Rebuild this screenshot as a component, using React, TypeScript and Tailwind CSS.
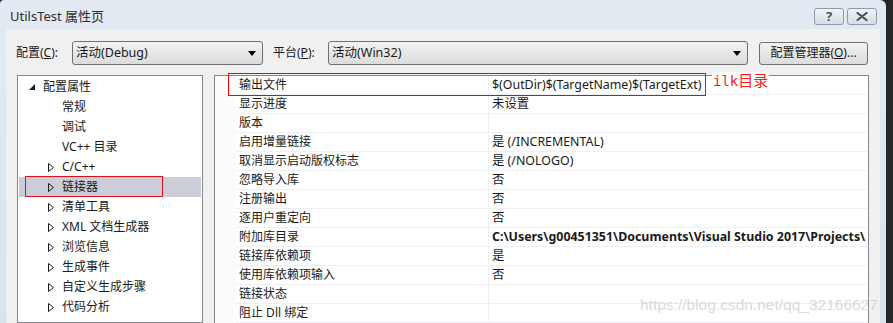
import React from "react";

const FONT = '"Noto Sans", "Noto Sans CJK SC", sans-serif';

type TreeItem = { t: string; lvl: 0 | 1; exp?: "open" | "closed"; sel?: boolean };

const tree: TreeItem[] = [
  { t: "配置属性", lvl: 0, exp: "open" },
  { t: "常规", lvl: 1 },
  { t: "调试", lvl: 1 },
  { t: "VC++ 目录", lvl: 1 },
  { t: "C/C++", lvl: 1, exp: "closed" },
  { t: "链接器", lvl: 1, exp: "closed", sel: true },
  { t: "清单工具", lvl: 1, exp: "closed" },
  { t: "XML 文档生成器", lvl: 1, exp: "closed" },
  { t: "浏览信息", lvl: 1, exp: "closed" },
  { t: "生成事件", lvl: 1, exp: "closed" },
  { t: "自定义生成步骤", lvl: 1, exp: "closed" },
  { t: "代码分析", lvl: 1, exp: "closed" },
];

const props: { l: string; v: string; b?: boolean }[] = [
  { l: "输出文件", v: "$(OutDir)$(TargetName)$(TargetExt)" },
  { l: "显示进度", v: "未设置" },
  { l: "版本", v: "" },
  { l: "启用增量链接", v: "是 (/INCREMENTAL)" },
  { l: "取消显示启动版权标志", v: "是 (/NOLOGO)" },
  { l: "忽略导入库", v: "否" },
  { l: "注册输出", v: "否" },
  { l: "逐用户重定向", v: "否" },
  { l: "附加库目录", v: "C:\\Users\\g00451351\\Documents\\Visual Studio 2017\\Projects\\", b: true },
  { l: "链接库依赖项", v: "是" },
  { l: "使用库依赖项输入", v: "否" },
  { l: "链接状态", v: "" },
  { l: "阻止 Dll 绑定", v: "" },
];

function OpenTri() {
  return (
    <svg width="6" height="6" viewBox="0 0 6 6" className="block">
      <polygon points="6,0 6,6 0,6" fill="#1a1a1a" />
    </svg>
  );
}

function ClosedTri() {
  return (
    <svg width="6" height="9" viewBox="0 0 6 9" className="block">
      <polygon points="0.5,0.5 5.5,4.5 0.5,8.5" fill="none" stroke="#1a1a1a" strokeWidth="1" />
    </svg>
  );
}

function Arrow() {
  return (
    <svg width="8" height="5" viewBox="0 0 8 5" className="block">
      <polygon points="0,0 8,0 4,5" fill="#000" />
    </svg>
  );
}

export default function App() {
  return (
    <div
      className="relative w-[893px] h-[323px] overflow-hidden bg-[#262626] text-[12px] text-[#1a1a1a]"
      style={{ fontFamily: FONT }}
    >
      <div className="w-[886px] h-full flex flex-col rounded-tr-[6px] rounded-tl-[4px] bg-gradient-to-b from-[#e3eaf2] to-[#d8e3ef]">
        {/* Title bar */}
        <div className="h-[29px] flex items-start shrink-0">
          <div className="pl-[10px] pt-[6px] text-[13px] text-[#2e2e2e] leading-[20px]">UtilsTest 属性页</div>
          <div className="ml-auto flex gap-[3px] pt-[8px] pr-[9px]">
            <div className="w-[30px] h-[17px] rounded-[3px] border border-[#8d9bad] bg-gradient-to-b from-[#f1f4f8] to-[#d6dde6] flex items-center justify-center text-[13px] font-bold leading-none text-[#46525f]">
              ?
            </div>
            <div className="w-[30px] h-[17px] rounded-[3px] border border-[#8d9bad] bg-gradient-to-b from-[#f1f4f8] to-[#d6dde6] flex items-center justify-center">
              <svg width="12" height="9" viewBox="0 0 12 9">
                <path d="M1.5 1 L10.5 8 M10.5 1 L1.5 8" stroke="#46525f" strokeWidth="2.2" strokeLinecap="round" />
              </svg>
            </div>
          </div>
        </div>

        {/* Client */}
        <div className="flex-1 mx-[6px] bg-[#f0f0f0] flex flex-col min-h-0">
          {/* Top row */}
          <div className="flex items-center pt-[12px] pl-[10px] pr-[12px] h-[36px] shrink-0">
            <span className="w-[56px]">
              配置(<span className="underline">C</span>):
            </span>
            <div className="w-[191px] h-[24px] rounded-[3px] border border-[#707070] bg-gradient-to-b from-[#f2f2f2] to-[#dcdcdc] flex items-center pl-[3px] pr-[6px]">
              <span className="text-[12.5px]">活动(Debug)</span>
              <span className="ml-auto">
                <Arrow />
              </span>
            </div>
            <span className="ml-[10px] w-[55px]">
              平台(<span className="underline">P</span>):
            </span>
            <div className="w-[420px] h-[24px] rounded-[3px] border border-[#707070] bg-gradient-to-b from-[#f2f2f2] to-[#dcdcdc] flex items-center pl-[3px] pr-[6px]">
              <span className="text-[12.5px]">活动(Win32)</span>
              <span className="ml-auto">
                <Arrow />
              </span>
            </div>
            <div className="ml-auto w-[109px] h-[23px] rounded-[3px] border border-[#707070] bg-gradient-to-b from-[#f2f2f2] to-[#dcdcdc] flex items-center justify-center">
              配置管理器(<span className="underline">O</span>)...
            </div>
          </div>

          {/* Panels */}
          <div className="flex gap-[11px] pt-[10px] px-[11px] flex-1 min-h-0">
            {/* Tree */}
            <div className="w-[186px] shrink-0 border border-[#828790] bg-white pt-[1px]">
              {tree.map((it, i) => (
                <div
                  key={i}
                  className={
                    "mx-[1px] h-[20px] flex items-center whitespace-nowrap " +
                    (it.sel ? "bg-[#cbcdd9] " : "") +
                    (it.lvl === 0 ? "pl-[10px]" : "pl-[29px]")
                  }
                >
                  <span className="w-[14px] flex items-center">
                    {it.exp === "open" ? <OpenTri /> : it.exp === "closed" ? <ClosedTri /> : null}
                  </span>
                  <span>{it.t}</span>
                </div>
              ))}
            </div>

            {/* Property grid */}
            <div className="flex-1 border border-[#828790] bg-white min-w-0">
              {props.map((p, i) => (
                <div key={i} className="flex h-[19px]">
                  <div className="w-[21px] shrink-0 bg-[#fbfbfb]" />
                  <div className="w-[253px] shrink-0 border-b border-r border-[#eef0f4] pl-[3px] flex items-center whitespace-nowrap">
                    {p.l}
                  </div>
                  <div
                    className={
                      "flex-1 min-w-0 overflow-hidden border-b border-[#eef0f4] pl-[3px] flex items-center whitespace-nowrap text-[12.4px] " +
                      (p.b ? "font-bold" : "")
                    }
                  >
                    {p.v}
                  </div>
                </div>
              ))}
            </div>
          </div>
        </div>
      </div>

      {/* Annotations */}
      <div className="absolute left-[228px] top-[73px] w-[478px] h-[23px] border-[1.5px] border-[#ff0000]" />
      <div className="absolute left-[25px] top-[176px] w-[138px] h-[21px] border border-[#e0101a]" />
      <div className="absolute left-[712px] top-[72px] h-[17px] bg-white px-[1px] flex items-center text-[#ff1a1a] text-[15px] leading-none">
        <span style={{ fontFamily: '"DejaVu Sans Mono", monospace' }} className="text-[14px]">ilk</span>
        <span>目录</span>
      </div>
      <div
        className="absolute left-[640px] top-[295px] text-[15.5px] leading-[20px] text-[#cfcfcf]/80 whitespace-nowrap"
        style={{ fontFamily: '"Liberation Sans", Arial, sans-serif' }}
      >
        https://blog.csdn.net/qq_32166627
      </div>
    </div>
  );
}
